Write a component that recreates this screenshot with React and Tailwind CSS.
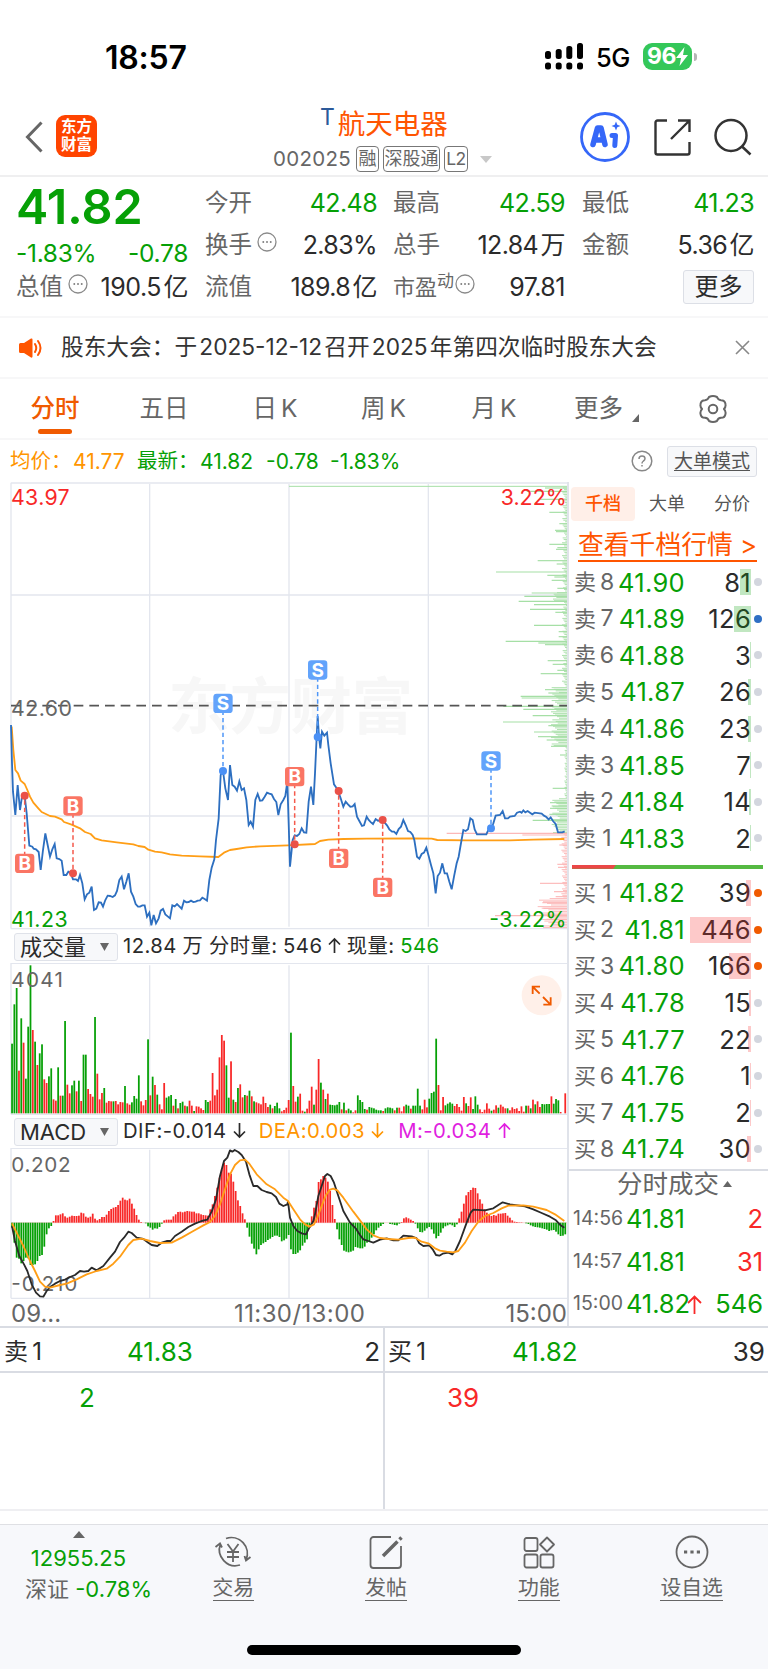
import { Fragment } from 'react'

const GREEN = '#06a006'
const RED = '#f82828'

const SELLS = [
  ['8', '41.90', '81', 11, 'bg-[#d3d6de]'],
  ['7', '41.89', '126', 17, 'bg-[#2f6fc4]'],
  ['6', '41.88', '3', 1, 'bg-[#d3d6de]'],
  ['5', '41.87', '26', 3, 'bg-[#d3d6de]'],
  ['4', '41.86', '23', 3, 'bg-[#d3d6de]'],
  ['3', '41.85', '7', 1, 'bg-[#d3d6de]'],
  ['2', '41.84', '14', 2, 'bg-[#d3d6de]'],
  ['1', '41.83', '2', 1, 'bg-[#d3d6de]'],
]

const BUYS = [
  ['1', '41.82', '39', 5, 'bg-[#f05a00]'],
  ['2', '41.81', '446', 61, 'bg-[#f05a00]'],
  ['3', '41.80', '166', 22, 'bg-[#f05a00]'],
  ['4', '41.78', '15', 2, 'bg-[#d3d6de]'],
  ['5', '41.77', '22', 3, 'bg-[#d3d6de]'],
  ['6', '41.76', '1', 1, 'bg-[#d3d6de]'],
  ['7', '41.75', '2', 1, 'bg-[#d3d6de]'],
  ['8', '41.74', '30', 4, 'bg-[#d3d6de]'],
]

const PRICE =
  '33,735 36,850 39,935 46,1005 53,915 60,990 66,950 74,947 80,1000 88,1097 97,1100 101,1106 108,1108 116,1116 122,1170 129,1110 136,1060 143,1095 150,1130 157,1108 164,1092 170,1135 178,1137 185,1142 191,1185 199,1185 205,1175 212,1178 219,1198 228,1198 234,1203 240,1185 247,1210 254,1258 261,1243 268,1238 275,1220 282,1290 289,1286 296,1267 303,1268 309,1280 316,1260 323,1247 330,1248 338,1251 345,1246 351,1233 358,1200 365,1190 372,1228 379,1205 386,1180 393,1235 400,1250 407,1272 414,1280 420,1280 427,1276 434,1276 441,1310 448,1298 454,1336 461,1305 468,1330 476,1315 482,1292 489,1287 496,1303 503,1309 510,1315 517,1276 524,1279 531,1272 538,1279 545,1286 552,1262 559,1267 566,1266 573,1262 580,1266 587,1265 593,1262 600,1261 607,1253 614,1257 621,1262 628,1200 635,1163 643,1138 648,1080 656,1015 662,885 669,873 676,925 684,960 690,855 697,915 704,920 711,932 718,904 725,930 732,925 739,960 746,1035 752,1025 759,1040 766,960 773,942 780,962 787,961 794,950 801,938 808,941 815,943 822,957 829,966 835,1005 842,973 850,960 856,948 862,905 866,1030 870,1160 875,1110 878,1080 884,1066 891,1068 898,1062 905,1045 912,1057 919,1058 926,965 933,920 940,975 945,880 950,770 953,708 957,770 961,805 966,755 973,767 981,758 985,795 992,850 1002,913 1009,923 1015,935 1022,955 1030,980 1037,965 1044,973 1051,980 1058,979 1064,972 1071,1010 1078,1023 1086,1038 1092,1036 1100,1010 1106,1020 1113,1027 1119,1032 1127,1017 1134,1022 1147,1020 1154,1028 1161,1036 1168,1048 1176,1055 1182,1055 1189,1062 1196,1047 1203,1040 1210,1020 1217,1035 1224,1053 1231,1056 1238,1065 1243,1080 1251,1130 1258,1136 1265,1122 1272,1118 1279,1103 1286,1128 1293,1155 1300,1180 1307,1240 1313,1188 1320,1178 1327,1150 1334,1180 1341,1180 1348,1205 1355,1228 1362,1190 1370,1150 1376,1130 1382,1095 1390,1050 1397,1053 1404,1048 1411,1015 1418,1020 1424,1048 1431,1063 1459,1063 1465,1050 1473,1045 1480,1030 1487,1007 1500,1005 1508,993 1515,1015 1524,1015 1530,1010 1544,1008 1551,998 1560,995 1565,998 1570,991 1576,997 1583,993 1590,998 1597,1003 1604,998 1625,1001 1632,1007 1639,1011 1646,1018 1652,1012 1659,1023 1667,1032 1674,1057 1687,1057 1694,1054'

const AVERAGE =
  '35,740 40,810 46,870 54,880 62,902 74,912 82,930 90,950 100,968 115,985 125,996 150,1008 165,1010 185,1018 192,1026 215,1034 240,1045 255,1056 272,1062 285,1075 305,1081 350,1087 400,1093 415,1098 434,1101 445,1109 465,1115 485,1117 510,1123 545,1127 600,1129 655,1131 672,1118 690,1110 710,1107 740,1102 780,1099 864,1096 945,1092 960,1083 985,1079 1030,1077 1100,1076 1240,1075 1295,1076 1312,1080 1400,1081 1530,1081 1600,1079 1693,1077'

// [kind, x, badge y, dot y]
const TRADES = [
  ['B', 74, 1150, 947],
  ['B', 219, 978, 1180],
  ['S', 669, 670, 873],
  ['B', 884, 890, 1093],
  ['S', 953, 570, 771],
  ['B', 1016, 1135, 933],
  ['B', 1148, 1222, 1020],
  ['S', 1473, 843, 1045],
]

// order depth on the right edge: y -> left end of the bar
const DEPTH = {
  24: 1635, 34: 1580, 58: 1620, 97: 1648, 131: 1678, 151: 1665, 155: 1668, 193: 1648, 203: 1672, 208: 1668, 242: 1613,
  252: 1670, 276: 1488, 286: 1642, 291: 1663, 301: 1655, 325: 1672, 339: 1595, 349: 1573, 364: 1556, 374: 1602,
  388: 1590, 397: 1666, 436: 1602, 455: 1676, 470: 1676, 484: 1517, 489: 1615, 494: 1635, 542: 1643, 553: 1658,
  571: 1672, 581: 1622, 629: 1635, 639: 1645, 649: 1562, 654: 1565, 679: 1510, 688: 1570, 707: 1598, 726: 1509,
  737: 1645, 756: 1602, 770: 1614, 780: 1640, 799: 1653, 825: 1680, 925: 1658, 968: 1650, 978: 1655, 985: 1650,
  1003: 1648, 1021: 1598, 1060: 1340, 1065: 1567, 1095: 1678, 1153: 1672, 1162: 1674, 1210: 1620, 1235: 1662,
  1250: 1667, 1268: 1627, 1285: 1630, 1307: 1485, 1318: 1640,
}

const depthLength = y => {
  const n = (y * 7919) % 13
  if (y > 1255) return 40 + n * 4
  if (y > 1060) return 5 + n
  if (y > 955) return 22 + n * 2
  if (y > 800) return 2 + n / 2
  if (y > 622) return 24 + n * 2
  if (y > 335 && y < 366) return 30 + n
  return 3 + n
}

const VOLUME =
  '355g 237g 188g 436r 279g 352r 460g 304g 120g 314r 349g 419r 384g 357g 462r 473r 453g 429g 522r 526r 426g 511r 511g 287g 478r 504r 480g 466g 498r 466g 527r 388g 388g 491r 506r 514r 275g 445r 522r 503r 488g 532r 527r 528r 528g 527r 537r 530r 531r 482g 534r 538r 531g 512g 520g 450g 528r 540r 524r 342g 510r 454g 479r 508g 537r 552r 473r 517g 513g 509g 541r 521g 549r 533g 529g 541r 543g 526r 541r 557g 543r 544r 549r 554r 524g 530g 526r 443r 510r 493r 396r 329r 346r 420g 517g 408r 523g 530r 488g 477r 516r 509g 511r 496g 513r 528g 531r 534r 537r 514r 533r 545r 538g 549r 542g 532g 549g 558r 554r 547r 524r 322g 482r 529r 514g 505r 556r 559g 550r 526r 484r 538g 493r 401r 472g 493r 521g 505r 538g 539g 540g 538g 530g 552r 532g 555r 550g 555g 561r 555r 510g 524g 530g 551g 553r 545g 547g 549g 553g 555g 555g 557r 549g 546g 547g 549g 555r 547g 547r 558r 543r 538g 541g 550r 541g 541g 490g 541g 552r 523r 546r 520g 503g 499g 340g 479r 555r 515r 540g 535g 531g 535g 542r 536r 545r 556r 515r 534g 542r 516r 551g 513g 538g 552r 560r 553r 534r 550r 556g 553r 540r 547g 538r 544r 549r 549g 555r 546r 551r 549r 557r 543r 559r 541g 541r 549g 523r 537g 528r 545r 536g 537g 536g 536g 513r 535g 521g 525g 560r 564r 504r'.split(' ')

const HISTOGRAM = [
  910, 955, 1000, 1003, 1017, 1010, 1000, 1002, 1022, 1022, 1020, 1010, 995, 992, 967, 930, 912, 905, 890, 873, 873, 870,
  867, 876, 880, 877, 874, 875, 875, 874, 865, 867, 877, 880, 877, 868, 883, 888, 884, 878, 878, 871, 860, 854, 850, 848,
  842, 829, 820, 826, 828, 823, 838, 853, 872, 886, 893, 895, 897, 906, 910, 916, 912, 913, 908, 898, 888, 886, 886, 886,
  876, 870, 863, 862, 864, 862, 860, 861, 862, 862, 867, 867, 870, 872, 873, 874, 855, 840, 815, 790, 760, 735, 715, 722,
  745, 748, 772, 800, 828, 845, 867, 885, 910, 937, 958, 973, 990, 975, 962, 957, 953, 947, 943, 938, 934, 934, 938, 951,
  948, 943, 932, 975, 989, 989, 985, 978, 964, 955, 945, 903, 876, 850, 830, 773, 765, 755, 760, 772, 800, 842, 884, 915,
  945, 962, 979, 982, 984, 982, 979, 968, 970, 972, 972, 967, 955, 950, 940, 930, 918, 910, 905, 899, 895, 895, 899, 900,
  902, 903, 898, 893, 882, 879, 882, 886, 890, 898, 912, 923, 924, 919, 912, 908, 915, 928, 942, 935, 925, 912, 906, 903,
  900, 903, 908, 900, 882, 862, 838, 813, 803, 797, 790, 791, 807, 825, 838, 855, 865, 872, 875, 872, 874, 868, 868, 867,
  866, 874, 880, 888, 892, 893, 894, 894, 895, 897, 899, 903, 906, 908, 909, 910, 912, 914, 916, 920, 918, 917, 922, 930,
  935, 934, 930,
]

const DIF =
  '36,905 45,950 58,995 72,1020 82,1040 95,1080 108,1105 120,1116 130,1117 140,1100 150,1088 165,1078 180,1070 195,1066 210,1058 225,1052 240,1040 252,1042 265,1040 275,1030 290,1038 310,1025 330,1000 345,982 360,953 372,940 385,922 395,926 410,940 430,944 445,955 455,962 472,965 485,955 500,950 512,950 525,935 545,922 565,908 585,898 605,890 622,886 635,862 648,825 660,755 672,710 682,700 690,678 697,682 704,677 715,683 725,692 738,712 748,750 760,785 772,785 785,797 800,803 815,807 828,818 838,838 850,845 862,840 864,832 870,880 880,905 892,920 905,927 918,930 928,910 940,890 945,870 955,815 965,785 975,755 982,749 992,755 1002,775 1015,815 1030,860 1050,895 1067,912 1080,932 1090,945 1105,950 1120,955 1140,946 1160,942 1180,948 1195,948 1210,934 1235,936 1250,942 1258,957 1270,965 1288,963 1298,975 1308,992 1318,994 1328,988 1345,985 1357,990 1366,980 1380,950 1400,895 1412,865 1420,856 1455,858 1480,852 1495,842 1508,834 1530,840 1575,846 1600,855 1625,866 1650,877 1668,888 1682,903 1693,910'

const DEA =
  '36,897 50,925 70,965 90,1010 105,1040 120,1072 135,1087 150,1090 180,1082 200,1078 230,1065 260,1050 290,1040 320,1033 340,1018 360,997 385,962 400,947 425,943 450,950 480,956 515,955 545,940 580,920 610,903 630,893 645,875 660,840 675,795 690,750 705,722 720,708 735,706 748,718 770,750 800,780 825,795 850,820 864,830 880,855 900,885 915,900 928,907 942,900 952,880 965,845 978,812 990,796 1000,793 1012,798 1030,820 1060,862 1080,888 1100,915 1120,933 1140,941 1165,944 1195,946 1225,941 1245,940 1265,952 1285,957 1305,972 1320,979 1340,982 1360,984 1375,980 1395,955 1415,920 1435,892 1455,875 1480,866 1505,852 1525,844 1570,843 1600,847 1640,857 1665,870 1693,890'

function More() {
  return (
    <svg width="20" height="20" viewBox="0 0 20 20" fill="none" stroke="#8a8a8a" strokeWidth="1.3" className="ml-[5px] mb-1.5 shrink-0">
      <circle cx="10" cy="10" r="9" />
      <path d="M5.5 10h1.6M9.2 10h1.6M12.9 10h1.6" strokeWidth="1.8" />
    </svg>
  )
}

function Stat({ label, value, green, more }) {
  return (
    <div className="flex h-[42px] items-center">
      <span className="text-[23.5px] text-[#666]">{label}</span>
      {more && <More />}
      <span className={`ml-auto text-[25px] [word-spacing:-4px] ${green ? 'text-[#06a006] tracking-[-0.6px]' : 'text-[#2b2b2b] tracking-[-0.6px]'}`}>{value}</span>
    </div>
  )
}

function StatusBar() {
  return (
    <div className="flex h-[100px] items-start pt-[41px]">
      <div className="ml-[105px] mt-px flex h-8 w-[82px] items-center text-[32px] font-semibold text-black tracking-[-0.2px]">18:57</div>
      <svg width="39" height="27" viewBox="0 0 39 27" className="ml-[358px] mt-[2px]">
        <rect x="0" y="8" width="6" height="8" rx="2.5" />
        <rect x="10.7" y="6" width="6" height="10" rx="2.5" />
        <rect x="21.3" y="3" width="6" height="13" rx="2.5" />
        <rect x="32" y="0" width="6" height="16" rx="2.5" />
        {[0, 10.7, 21.3, 32].map(x => <rect key={x} x={x} y="19.5" width="6" height="7" rx="2.5" />)}
      </svg>
      <div className="ml-3 flex h-[34px] w-[47px] items-center text-[25.5px] font-medium tracking-[-0.5px] text-black">5G</div>
      <div className="mt-[2px] flex h-[27px] w-[49px] items-center justify-center rounded-[9px] bg-[#34c759] text-[23px] font-bold tracking-[-0.5px] text-white">
        96
        <svg width="12" height="19" viewBox="0 0 12 19" fill="#fff"><path d="M8.5 0L0 11h5L3.5 19 12 8H7z" /></svg>
      </div>
      <div className="ml-[2px] mt-3 h-2 w-[3px] rounded-r bg-[#b5b5b5]" />
    </div>
  )
}

function Header() {
  return (
    <div className="flex h-[77px] items-start border-b-2 border-[#efeff0]">
      <svg width="18" height="32" viewBox="0 0 18 32" fill="none" stroke="#666" strokeWidth="3" className="ml-[25px] mt-[21px]">
        <path d="M16.5 1.5L2.5 16l14 14.5" />
      </svg>
      <div className="ml-[13px] mt-[15px] flex h-[42px] w-[41px] flex-col items-center justify-center rounded-[9px] bg-[#ff4400] text-[15.5px] font-bold leading-[18px] text-white">
        <span>东方</span>
        <span>财富</span>
      </div>
      <div className="ml-[176px] flex w-[222px] flex-col">
        <div className="mt-[6px] flex h-[38px] items-start pl-[47px]">
          <span className="text-[23px] leading-[22px] text-[#2c5a9a]">T</span>
          <span className="ml-[3px] text-[27.5px] leading-[37px] text-[#ff5500]">航天电器</span>
        </div>
        <div className="mt-[2px] flex h-[26px] items-center text-[20.5px] text-[#666]">
          <span className="w-[83px] tracking-[0.3px]">002025</span>
          <span className="flex h-[26px] w-[23px] items-center justify-center rounded-[4px] border border-[#777] text-[18px]">融</span>
          <span className="ml-1 flex h-[26px] w-[57px] items-center justify-center rounded-[4px] border border-[#777] text-[18px]">深股通</span>
          <span className="ml-1 flex h-[26px] w-[24px] items-center justify-center rounded-[4px] border border-[#777] text-[17.5px] tracking-[-0.5px]">L2</span>
          <svg width="12" height="7" className="ml-3 shrink-0"><path d="M0 0h12L6 7z" fill="#c8c8c8" /></svg>
        </div>
      </div>
      <svg width="50" height="52" viewBox="0 0 50 52" fill="none" className="ml-[85px] mt-[11px]">
        <circle cx="25" cy="26" r="23.5" stroke="#3567f8" strokeWidth="2.8" />
        <path d="M13 33.500L17.500 17h3.500L25 33.500M15 29h8" stroke="#3567f8" strokeWidth="5.5" strokeLinejoin="round" strokeLinecap="round" />
        <path d="M32 24.500h3.500L34.800 34.500" stroke="#3567f8" strokeWidth="5" strokeLinecap="round" strokeLinejoin="round" />
        <path d="M36 10.500l1.300 3.200 3.200 1.300-3.200 1.300-1.300 3.200-1.300-3.200-3.200-1.300 3.200-1.300z" fill="#3567f8" />
      </svg>
      <svg width="37" height="37" viewBox="0 0 37 37" fill="none" stroke="#333" strokeWidth="2.4" className="ml-[24px] mt-[19px]">
        <path d="M13 1.500H3.500a2 2 0 0 0-2 2v30a2 2 0 0 0 2 2h30a2 2 0 0 0 2-2V23M24 1.500h11.500V13M35 2L17 20" />
      </svg>
      <svg width="38" height="38" viewBox="0 0 38 38" fill="none" stroke="#333" strokeWidth="2.5" className="ml-[23px] mt-[18px]">
        <circle cx="17" cy="17.5" r="15.5" />
        <path d="M28 28.500l8.500 8" />
      </svg>
    </div>
  )
}

function Quote() {
  return (
    <div className="flex h-[141px] border-b-2 border-[#f7f7f8] pt-[5px]">
      <div className="ml-[16px] w-[172px]">
        <div className="flex h-[50px] items-center text-[48.5px] font-semibold text-[#06a006]">41.82</div>
        <div className="flex h-[34px] items-center justify-between text-[24.5px] text-[#06a006] tracking-[-0.3px]">
          <span className="pt-2">-1.83%</span>
          <span className="pt-2">-0.78</span>
        </div>
        <div className="flex h-[42px] items-center">
          <span className="text-[23.5px] text-[#666]">总值</span>
          <More />
          <span className="ml-auto text-[25px] text-[#2b2b2b] tracking-[-0.5px] [word-spacing:-4px]">190.5 亿</span>
        </div>
      </div>
      <div className="ml-[17px] w-[172px]">
        <Stat label="今开" value="42.48" green />
        <Stat label="换手" value="2.83%" more />
        <Stat label="流值" value="189.8 亿" />
      </div>
      <div className="ml-[16px] w-[172px]">
        <Stat label="最高" value="42.59" green />
        <Stat label="总手" value="12.84 万" />
        <div className="flex h-[42px] items-center">
          <span className="text-[22px] text-[#666]">市盈</span>
          <span className="mb-3 text-[17px] text-[#666]">动</span>
          <span className="-ml-[4px]"><More /></span>
          <span className="ml-auto text-[25px] tracking-[-0.5px] text-[#2b2b2b]">97.81</span>
        </div>
      </div>
      <div className="ml-[17px] w-[172px]">
        <Stat label="最低" value="41.23" green />
        <Stat label="金额" value="5.36 亿" />
        <div className="ml-auto mt-1 flex h-[34px] w-[71px] items-center justify-center rounded-[3px] border border-[#dcdfe6] bg-[#f7f8fa] text-[24px] text-[#2b2b2b]">更多</div>
      </div>
    </div>
  )
}

function Notice() {
  return (
    <div className="flex h-[61px] items-center border-b-2 border-[#f7f7f8]">
      <svg width="24" height="20" viewBox="0 0 24 20" className="ml-[19px]">
        <path d="M0 6.500A1.500 1.500 0 0 1 1.500 5H5l7-4.500q1.500-.5 1.500 1v17q0 1.500-1.500 1L5 15H1.500A1.500 1.500 0 0 1 0 13.500z" fill="#ff5500" />
        <path d="M16 6q2.500 4 0 8M19 3q5 7 0 14" fill="none" stroke="#ff5500" strokeWidth="2" strokeLinecap="round" />
      </svg>
      <span className="ml-[18px] w-[600px] whitespace-nowrap text-[22.7px] text-[#333] [word-spacing:-4.2px]">
        股东大会：于 2025-12-12 召开 2025 年第四次临时股东大会
      </span>
      <svg width="15" height="15" viewBox="0 0 15 15" stroke="#888" strokeWidth="1.6" className="ml-[74px]"><path d="M1 1l13 13M14 1L1 14" /></svg>
    </div>
  )
}

function Tabs() {
  return (
    <div className="flex h-[61px] items-center border-b-2 border-[#f7f7f8] text-[24.5px] text-[#666] [word-spacing:-3px]">
      <div className="flex w-[110px] flex-col items-center pt-[5px] text-[#f05a00]">
        <span className="font-medium leading-[38px]">分时</span>
        <span className="mt-[2px] h-[5px] w-[34px] rounded-full bg-[#f05a00]" />
      </div>
      <span className="w-[108px] text-center">五日</span>
      <span className="w-[114px] text-center">日 K</span>
      <span className="w-[103px] text-center">周 K</span>
      <span className="w-[118px] text-center">月 K</span>
      <span className="ml-[21px] flex w-[66px] items-end">更多<svg width="7" height="8" className="-mb-px ml-[9px] shrink-0"><path d="M7 0v8H0z" fill="#666" /></svg></span>
      <svg width="30" height="30" viewBox="0 0 30 30" fill="none" stroke="#666" strokeWidth="2" strokeLinejoin="round" className="ml-[58px]">
        <path d="M11 3q4-2 8 0 1 3 4 3.200 4 0 4.500 4 .5 2.500-1.500 4.800 2 2.300 1.500 4.800-.5 4-4.500 4-3 .2-4 3.200-4 2-8 0-1-3-4-3.200-4 0-4.500-4-.5-2.500 1.500-4.800-2-2.300-1.500-4.800.5-4 4.500-4 3-.2 4-3.200z" />
        <circle cx="15" cy="15" r="4.3" />
      </svg>
    </div>
  )
}

function Summary() {
  return (
    <div className="flex h-[42px] items-center text-[21px] text-[#06a006]">
      <span className="ml-[10px] w-[63px] whitespace-nowrap text-[20.5px] text-[#ff9500]">均价：</span>
      <span className="w-[64px] text-[#ff9500]">41.77</span>
      <span className="w-[63px] whitespace-nowrap text-[20.5px]">最新：</span>
      <span className="w-[66px]">41.82</span>
      <span className="w-[64px]">-0.78</span>
      <span>-1.83%</span>
      <svg width="22" height="22" viewBox="0 0 22 22" fill="none" stroke="#888" strokeWidth="1.5" className="ml-auto">
        <circle cx="11" cy="11" r="9.8" />
        <path d="M8 9q0-3 3-3t3 2.700q0 1.300-1.600 2.300Q11 12 11 13.500M11 15v1.600" />
      </svg>
      <span className="ml-[14px] mr-[11px] flex h-[31px] w-[90px] items-center justify-center rounded-[3px] border border-[#dcdfe6] bg-[#f7f8fa] text-[19px] text-[#555] underline underline-offset-2">大单模式</span>
    </div>
  )
}

function PriceChart() {
  const rows = []
  for (let i = 0; i < 274; i++) rows.push(24 + i * 4.83)
  return (
    <svg width="567" height="448" viewBox="0 6 1701 1344" className="block overflow-visible">
      <g fill="#f7f7f7" fontSize="184" fontWeight="700" fontFamily="'Noto Sans CJK SC'">
        <text x="505" y="747" textLength="734">东方财富</text>
      </g>
      <path d="M33 9H1701M33 345H1701M33 1008H1701M33 1346H1701M33 8V1346M449 12V1340M867 12V1340M1285 12V1340" stroke="#e3e6ee" strokeWidth="4" />
      <path d="M867 19H1701" stroke="#a5dfa5" strokeWidth="3" />
      {rows.map(y => (
        <path key={y} d={`M${1701 - depthLength(Math.round(y))} ${y}H1701`} stroke={y > 1058 ? '#fcc0c0' : '#b2e2b2'} strokeWidth="3.2" />
      ))}
      {Object.entries(DEPTH).map(([y, x]) => (
        <path key={y} d={`M${x} ${y}H1701`} stroke={y > 1058 ? '#fcb8b8' : '#a5dfa5'} strokeWidth="3.5" />
      ))}
      <path d="M33 677H1701" stroke="#555" strokeWidth="5" strokeDasharray="29 18" />
      <g fontSize="64">
        <text x="33" y="74" fill={RED} textLength="176">43.97</text>
        <text x="33" y="708" fill="#666" textLength="183">42.60</text>
        <text x="33" y="1342" fill={GREEN} textLength="170">41.23</text>
        <text x="1502" y="74" fill={RED} textLength="198">3.22%</text>
        <text x="1468" y="1342" fill={GREEN} textLength="231">-3.22%</text>
      </g>
      <polyline points={AVERAGE} fill="none" stroke="#ff9e16" strokeWidth="5.5" strokeLinejoin="round" />
      <polyline points={PRICE} fill="none" stroke="#2d6fc0" strokeWidth="5.5" />
      {TRADES.map(([kind, x, badge, dot]) => {
        const color = kind === 'S' ? '#62a3fb' : '#fa7564'
        return (
          <g key={x}>
            <path d={`M${x} ${badge}V${dot}`} stroke={kind === 'S' ? '#4f97f8' : '#f55a4c'} strokeWidth="4.5" strokeDasharray="13 9" />
            <circle cx={x} cy={dot} r="12" fill={kind === 'S' ? '#4a90f5' : '#ea5148'} />
            <rect x={x - 29} y={badge - 29} width="58" height="58" rx="10" fill={color} />
            <text x={x} y={badge + 20} fontSize="57" fontWeight="700" fill="#fff" textAnchor="middle">{kind}</text>
          </g>
        )
      })}
    </svg>
  )
}

function Indicator({ name, children }) {
  return (
    <div className="flex h-[33px] items-center whitespace-nowrap text-[20.3px] tracking-[0.45px] text-[#2b2b2b]">
      <span className="ml-[14px] mr-[5px] flex h-[28px] w-[104px] shrink-0 items-center rounded-[3px] border border-[#dfe2e9] bg-[#f7f8fa] pl-[5px] text-[22px] tracking-normal">
        {name}
        <svg width="9" height="8" className="ml-auto mr-[8px]"><path d="M0 0h9L4.500 8z" fill="#666" /></svg>
      </span>
      {children}
    </div>
  )
}

function Arrow({ up }) {
  return (
    <svg width="13" height="17" viewBox="0 0 13 17" fill="none" stroke="currentColor" strokeWidth="1.7" className="inline align-[-1px]">
      <path d={up ? 'M6.500 16V2M1 7.500L6.500 2 12 7.500' : 'M6.500 1v14M1 9.500L6.500 15 12 9.500'} />
    </svg>
  )
}

function VolumeChart() {
  return (
    <svg width="567" height="152" viewBox="0 113 1701 456" className="block">
      <path d="M33 114H1701M33 567H1701M33 113V567M449 120V567M867 120V567M1285 120V567" stroke="#e3e6ee" strokeWidth="4" />
      {VOLUME.map((bar, i) => {
        const top = parseInt(bar)
        return <rect key={i} x={33.5 + i * 6.915} y={top} width="5.3" height={564 - top} fill={bar.endsWith('g') ? GREEN : RED} />
      })}
      <text x="34" y="185" fontSize="62" fill="#666" textLength="155">4041</text>
      <circle cx="1625" cy="210" r="60" fill="#fff0e9" />
      <path d="M1598 206v-22h22M1599 185l20 20M1652 216v22h-22M1651 237l-22-22" fill="none" stroke="#f05a00" strokeWidth="5.5" />
    </svg>
  )
}

function MacdChart() {
  return (
    <svg width="567" height="151" viewBox="0 671 1701 453" className="block">
      <path d="M33 672H1701M33 1122H1701M33 671V1122M449 676V1122M867 676V1122M1285 676V1122" stroke="#e3e6ee" strokeWidth="4" />
      <path d="M33 895H1701" stroke="#f3c4c4" strokeWidth="2" />
      {HISTOGRAM.map((v, i) => (
        <rect key={i} x={33.5 + i * 6.915} y={Math.min(v, 895)} width="5.3" height={Math.abs(v - 895)} fill={v > 895 ? GREEN : RED} />
      ))}
      <g fontSize="62" fill="#666">
        <text x="34" y="742" textLength="178">0.202</text>
        <text x="34" y="1099" textLength="198">-0.210</text>
      </g>
      <polyline points={DIF} fill="none" stroke="#2a2a2a" strokeWidth="5.5" strokeLinejoin="round" />
      <polyline points={DEA} fill="none" stroke="#ff9e16" strokeWidth="5.5" strokeLinejoin="round" />
    </svg>
  )
}

function Level({ side, row }) {
  const [level, price, volume, width, dot] = row
  return (
    <div className="flex h-[36.6px] items-center">
      <span className="ml-[5px] w-[25px] text-[22px] text-[#666]">{side}</span>
      <span className="w-[16px] text-center text-[23px] text-[#666]">{level}</span>
      <span className="w-[70px] text-right text-[25.5px] tracking-[0.3px] text-[#06a006]">{price}</span>
      <span className="relative flex h-[26px] w-[66px] items-center justify-end text-[25.5px] tracking-[0.3px] text-[#2b2b2b]">
        {volume}
        <span className={`absolute right-0 h-[26px] ${side === '卖' ? 'bg-[#06a006]/25' : 'bg-[#f82828]/25'}`} style={{ width }} />
      </span>
      <span className={`ml-[3px] size-2 rounded-full ${dot}`} />
    </div>
  )
}

function OrderBook() {
  return (
    <div className="w-[199px]">
      <div className="flex h-[44px] items-center text-[18px] text-[#555]">
        <span className="ml-[2px] flex h-[34px] w-[64px] items-center justify-center rounded-[4px] bg-[#ffefe8] font-medium text-[#ff5500]">千档</span>
        <span className="w-[64px] text-center">大单</span>
        <span className="w-[66px] text-center">分价</span>
      </div>
      <div className="ml-[9px] flex h-[38px] w-[182px] items-center whitespace-nowrap text-[25.8px] text-[#ff5500]">
        <span className="h-[33px] border-b-2 border-[#ff5500] leading-[31px]">查看千档行情 &gt;</span>
      </div>
      {SELLS.map(row => <Level key={row[0]} side="卖" row={row} />)}
      <div className="ml-[3px] mt-[8px] flex h-[4px] w-[191px] bg-[#55b942]">
        <div className="w-[44px] bg-[#eb4747] [clip-path:polygon(0_0,100%_0,94%_100%,0_100%)]" />
      </div>
      <div className="h-[6px]" />
      {BUYS.map(row => <Level key={row[0]} side="买" row={row} />)}
      <div className="mt-[1px] flex h-[29px] items-center border-t-2 border-[#d9dce3] pl-[48px] text-[25.5px] text-[#666]">
        分时成交
        <svg width="9" height="6" className="ml-1"><path d="M0 6h9L4.500 0z" fill="#666" /></svg>
      </div>
      {[['14:56', '41.81', '2'], ['14:57', '41.81', '31'], ['15:00', '41.82', '546']].map(([time, price, volume]) => (
        <div key={time} className="flex h-[42.7px] items-center">
          <span className="ml-[4px] w-[53px] text-[19.5px] text-[#666]">{time}</span>
          <span className="w-[61px] text-[25.5px] tracking-[-0.1px] text-[#06a006]">{price}</span>
          {volume === '546' && <svg width="15" height="19" viewBox="0 0 15 19" fill="none" stroke={RED} strokeWidth="1.8"><path d="M7.500 19V1.500M1 8l6.500-6.500L14 8" /></svg>}
          <span className={`ml-auto mr-[5px] text-[25.5px] ${volume === '546' ? 'text-[#06a006]' : 'text-[#f82828]'}`}>{volume}</span>
        </div>
      ))}
    </div>
  )
}

function Queue() {
  const sides = [
    ['卖', '41.83', '2', 'text-[#06a006] pl-[79px]'],
    ['买', '41.82', '39', 'text-[#f82828] pl-[62px]'],
  ]
  return (
    <div className="flex h-[185px] border-y-2 border-t-[#d9dce3] border-b-[#efeff2]">
      {sides.map(([side, price, volume, style], i) => (
        <Fragment key={side}>
          {i === 1 && <div className="w-[2px] bg-[#d9dce3]" />}
          <div className="flex-1">
            <div className="flex h-[45px] items-center border-b-2 border-[#d9dce3] pt-[4px] text-[26px] text-[#2b2b2b]">
              <span className={`whitespace-nowrap text-[24px] [word-spacing:-2.5px] ${i ? 'ml-[3px] w-[124px]' : 'ml-[4px] w-[123px]'}`}>{side} 1</span>
              <span className="text-[#06a006]">{price}</span>
              <span className="ml-auto mr-[3px]">{volume}</span>
            </div>
            <div className={`flex h-[50px] items-center text-[26px] ${style}`}>{volume}</div>
          </div>
        </Fragment>
      ))}
    </div>
  )
}

function NavItem({ label, children }) {
  return (
    <div className="flex flex-1 flex-col items-center pt-[9px] text-[#666]">
      <svg width="38" height="36" viewBox="0 0 38 36" fill="none" stroke="currentColor" strokeWidth="1.8">{children}</svg>
      <span className="mt-[5px] border-b-[1.5px] border-[#666] text-[20.8px] leading-[25px]">{label}</span>
    </div>
  )
}

function Footer() {
  return (
    <div className="mt-[13px] h-[145px] border-t border-[#dfe0e4] bg-[#f7f8fb]">
      <div className="flex h-[120px]">
        <div className="flex w-[157px] flex-col items-center pt-[6px]">
          <svg width="12" height="7"><path d="M0 7h12L6 0z" fill="#666" /></svg>
          <span className="mt-[5px] text-[22px] leading-[30px] text-[#06a006]">12955.25</span>
          <span className="ml-[20px] mt-[1px] whitespace-nowrap text-[22px] leading-[30px] text-[#06a006]"><span className="text-[#666]">深证</span> -0.78%</span>
        </div>
        <NavItem label="交易">
          <path d="M12 4.500A16 16 0 0 1 32 26M26 31A16 16 0 0 1 6.500 10M1.500 13l4.500-3.500 2 4M36.500 23l-4.500 3.500-1.500-4.500" />
          <path d="M13.500 10l5.500 7.500L24.500 10M13 18h12M13 23h12M19 17.500V28" />
        </NavItem>
        <NavItem label="发帖">
          <path d="M24 3H6.500a3 3 0 0 0-3 3v25a3 3 0 0 0 3 3H31a3 3 0 0 0 3-3V12" />
          <path d="M16 22L30.500 7.500M32.500 5.500l2-2" strokeWidth="3.5" />
        </NavItem>
        <NavItem label="功能">
          <rect x="4.5" y="4" width="13" height="13" rx="2" />
          <rect x="4.5" y="20.5" width="13" height="13" rx="2" />
          <rect x="20.5" y="20.5" width="13" height="13" rx="2" />
          <path d="M27 3.500l7 7-7 7-7-7z" strokeLinejoin="round" />
        </NavItem>
        <NavItem label="设自选">
          <circle cx="19" cy="18" r="15.5" />
          <path d="M11 18h3.200M17.400 18h3.200M23.800 18h3.200" strokeWidth="3.2" />
        </NavItem>
      </div>
      <div className="mx-auto h-[10px] w-[274px] rounded-full bg-black" />
    </div>
  )
}

export default function App() {
  return (
    <div className="h-[1669px] w-[768px] overflow-hidden bg-white font-['Inter','Noto_Sans_CJK_SC',sans-serif] leading-none">
      <StatusBar />
      <Header />
      <Quote />
      <Notice />
      <Tabs />
      <Summary />
      <div className="flex h-[844px]">
        <div className="w-[569px] border-r-2 border-[#e0e3ea]">
          <PriceChart />
          <Indicator name="成交量">
            <span className="[word-spacing:-0.5px]">12.84 万 分时量: 546 <Arrow up /> 现量: <span className="text-[#06a006]">546</span></span>
          </Indicator>
          <VolumeChart />
          <Indicator name="MACD">
            <span>DIF:-0.014 <Arrow /></span>
            <span className="ml-[13px] text-[#ff9500]">DEA:0.003 <Arrow /></span>
            <span className="ml-[14px] text-[#e01ee0]">M:-0.034 <Arrow up /></span>
          </Indicator>
          <MacdChart />
          <div className="flex h-[27px] items-center pl-[11px] pt-[2px] text-[24px] text-[#666]">
            <span className="w-[223px]">09...</span>
            <span className="whitespace-nowrap tracking-[0.4px]">11:30/13:00</span>
            <span className="ml-auto">15:00</span>
          </div>
        </div>
        <OrderBook />
      </div>
      <Queue />
      <Footer />
    </div>
  )
}
